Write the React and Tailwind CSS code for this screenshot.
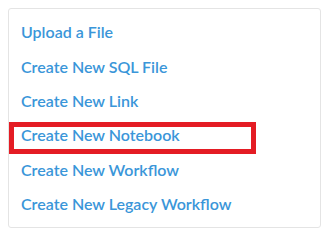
import React from 'react'

const items = [
  'Upload a File',
  'Create New SQL File',
  'Create New Link',
  'Create New Notebook',
  'Create New Workflow',
  'Create New Legacy Workflow',
]

export default function App () {
  return (
    <div className="w-[328px] h-[237px] bg-white p-2 pr-[7px]" style={{ fontFamily: 'Lato, "Open Sans", sans-serif' }}>
      <div className="h-[220px] rounded-[3px] border border-[#e4e4e4] pt-[6px] pl-3">
        {items.map((label, i) => (
          <div key={label} className="relative h-[34.4px] flex items-center">
            {/* highlight box around the notebook entry */}
            {i === 3 && (
              <div className="absolute left-[-12px] top-[4px] w-[247px] h-[32px] border-[5px] border-[#e41c24]" />
            )}
            <a href="#" className="relative text-[16px] font-semibold text-[#3a96d9]">{label}</a>
          </div>
        ))}
      </div>
    </div>
  )
}
